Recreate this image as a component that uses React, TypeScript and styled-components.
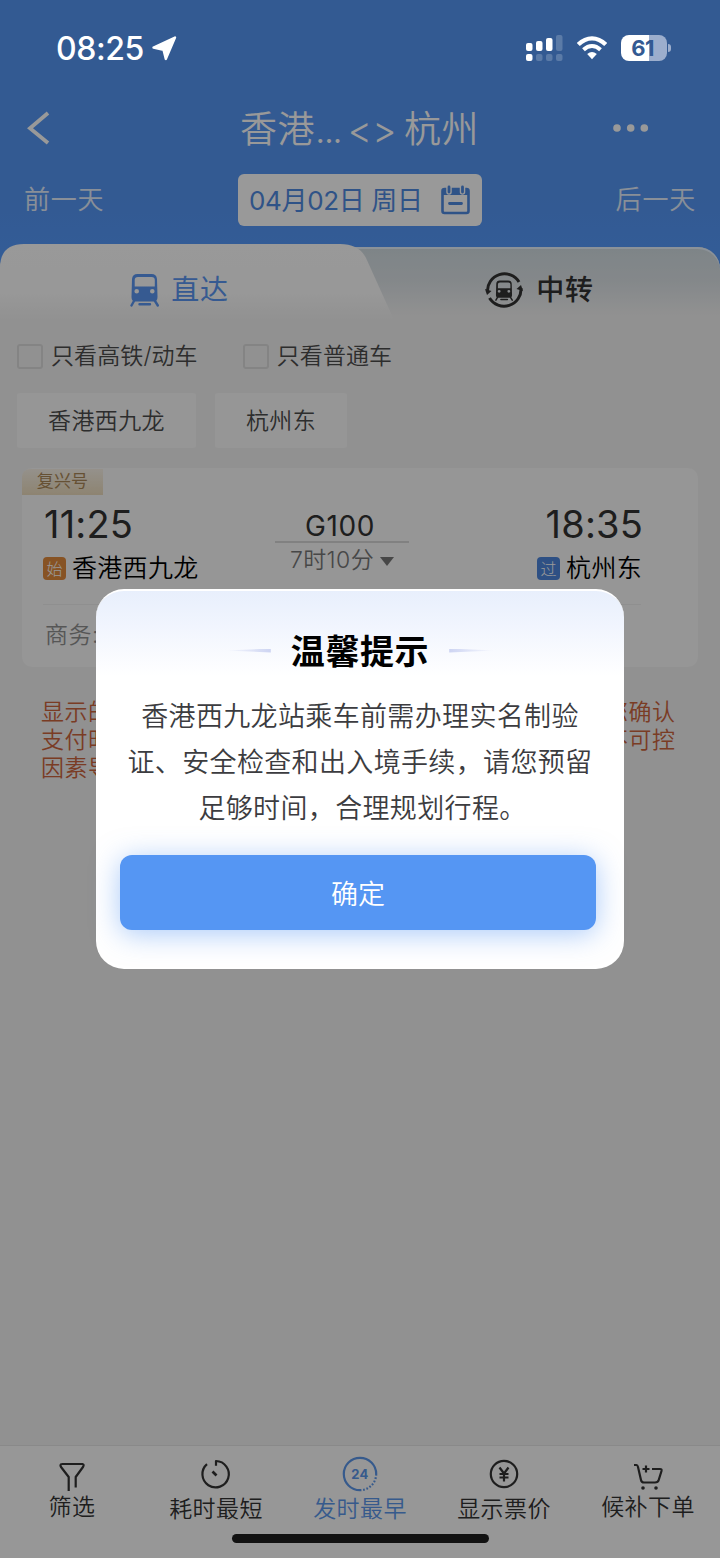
import React from "react";
import styled, { createGlobalStyle } from "styled-components";

const Global = createGlobalStyle`
  *, *::before, *::after { box-sizing: border-box; }
  body {
    margin: 0;
    font-family: Inter, "Noto Sans CJK SC", sans-serif;
    -webkit-font-smoothing: antialiased;
  }
  p, h1, h2 { margin: 0; font-weight: 400; }
  button { font: inherit; border: 0; padding: 0; background: none; color: inherit; }
  svg { display: block; flex: none; }
`;

const Page = styled.div`
  position: relative;
  width: 720px;
  height: 1558px;
  overflow: hidden;
  display: flex;
  flex-direction: column;
  background: #f2f2f2;
`;

/* status bar */
const StatusBar = styled.div`
  position: absolute;
  inset: 0 0 auto 0;
  z-index: 3;
  height: 96px;
  padding: 0 49px 0 56px;
  display: flex;
  align-items: center;
  color: #fff;
`;
const Clock = styled.span`
  font-size: 32px;
  font-weight: 500;
  letter-spacing: -0.4px;
  width: 96px;
  white-space: nowrap;
`;
const StatusIcons = styled.div`
  margin-left: auto;
  display: flex;
  align-items: center;
  gap: 14px;
`;
const Battery = styled.div`
  position: relative;
  width: 46px;
  height: 26px;
  margin-right: 4px;
  padding-right: 3px;
  border-radius: 8px;
  background: linear-gradient(90deg, #fff 61%, #9caecd 61%);
  color: #335a92;
  font-size: 22px;
  font-weight: 700;
  line-height: 26px;
  text-align: center;
  letter-spacing: -0.6px;
  &::after {
    content: "";
    position: absolute;
    right: -4px;
    top: 9px;
    width: 3px;
    height: 8px;
    border-radius: 0 3px 3px 0;
    background: #9caecd;
  }
`;

/* header */
const Header = styled.header`
  height: 272px;
  padding-top: 96px;
  background: linear-gradient(#5596f3 0, #5596f3 190px, #5599fb 250px);
  color: #fff;
`;
const TitleRow = styled.div`
  height: 62px;
  padding: 0 71px 0 26px;
  display: grid;
  grid-template-columns: 60px 1fr 40px;
  align-items: center;
`;
const Title = styled.h1`
  padding: 5px 0 0 24px;
  text-align: center;
  font-size: 37px;
  font-weight: 350;
  letter-spacing: 0.5px;
  word-spacing: -4px;
  line-height: 58px;
  white-space: nowrap;
`;
const Ellipsis = styled.span`
  letter-spacing: -1.9px;
`;
const DateRow = styled.div`
  margin-top: 16px;
  height: 52px;
  padding: 0 24px;
  display: grid;
  grid-template-columns: 1fr 244px 1fr;
  align-items: center;
`;
const DayLink = styled.span<{ $end?: boolean }>`
  padding-bottom: 6px;
  font-size: 26px;
  font-weight: 350;
  letter-spacing: 0.8px;
  opacity: 0.85;
  text-align: ${(p) => (p.$end ? "right" : "left")};
`;
const DateBox = styled.div`
  height: 52px;
  padding: 0 11px;
  display: flex;
  align-items: center;
  justify-content: space-between;
  border-radius: 6px;
  background: #fff;
  color: #4f8ae2;
  font-size: 26px;
  letter-spacing: -0.35px;
  white-space: nowrap;
`;
const DateText = styled.span`
  padding-bottom: 4px;
`;

/* tabs */
const Tabs = styled.nav`
  position: relative;
  height: 76px;
  margin-top: -28px;
  display: grid;
  grid-template-columns: 359px 1fr;
  &::before {
    content: "";
    position: absolute;
    inset: 3px 0 0 0;
    border-radius: 22px 22px 0 0;
    background: linear-gradient(#d2dde2, #dde3e7 35px, #f2f2f2 68px);
    box-shadow: inset 0 2px 0 #e8f3ff;
  }
`;
const Tab = styled.div<{ $active?: boolean }>`
  position: relative;
  display: flex;
  align-items: center;
  justify-content: center;
  gap: ${(p) => (p.$active ? "11px" : "13px")};
  height: 92px;
  line-height: 40px;
  font-size: 28px;
  letter-spacing: 0.8px;
  font-weight: ${(p) => (p.$active ? 400 : 500)};
  color: ${(p) => (p.$active ? "#5a96f2" : "#333")};
`;
const TabShape = styled.div`
  position: absolute;
  left: 0;
  top: 0;
  width: 394px;
  height: 76px;
  background: linear-gradient(#fff, #fdfdfd 50px, #f2f2f2 76px);
  clip-path: path("M0 76 V24 Q0 0 24 0 H340 Q359 0 366 14 L394 76 Z");
`;

/* filters */
const Checks = styled.div`
  height: 48px;
  margin-top: 12px;
  padding-left: 17px;
  display: flex;
  align-items: center;
  gap: 45px;
`;
const Check = styled.label`
  display: flex;
  align-items: center;
  gap: 8px;
  font-size: 23px;
  font-weight: 350;
  line-height: 32px;
  letter-spacing: 0.1px;
  color: #4c4c4c;
  &::before {
    content: "";
    width: 26px;
    height: 25px;
    border: 2px solid #dcdcdc;
    border-radius: 3px;
  }
`;
const Chips = styled.div`
  margin-top: 13px;
  padding-left: 17px;
  display: flex;
  gap: 19px;
`;
const Chip = styled.button<{ $w: number }>`
  width: ${(p) => p.$w}px;
  height: 55px;
  padding-bottom: 4px;
  border-radius: 3px;
  background: #fafafa;
  color: #4c4c4c;
  font-size: 23px;
  font-weight: 350;
  letter-spacing: 0.4px;
`;

/* train card */
const Card = styled.section`
  position: relative;
  margin: 20px 22px 0;
  height: 199px;
  border-radius: 10px;
  background: #fafafa;
`;
const Tag = styled.span`
  position: absolute;
  left: 0;
  top: 1px;
  width: 81px;
  height: 26px;
  text-align: center;
  font-size: 17px;
  line-height: 24px;
  letter-spacing: 0.2px;
  color: #ab8757;
  background: linear-gradient(#f8f2e8, #ecdcbd);
  border-radius: 8px 0 0 0;
`;
const Trip = styled.div`
  height: 137px;
  margin: 0 57px 0 21px;
  padding-top: 32px;
  display: grid;
  grid-template-columns: 1fr 134px 1fr;
  border-bottom: 1px solid #eeeeee;
`;
const Stop = styled.div<{ $end?: boolean }>`
  display: flex;
  flex-direction: column;
  align-items: ${(p) => (p.$end ? "flex-end" : "flex-start")};
`;
const Time = styled.span`
  height: 48px;
  padding-left: 1px;
  line-height: 48px;
  font-size: 38px;
  color: #333;
  letter-spacing: 0.2px;
  margin-right: -2px;
`;
const Station = styled.span`
  display: flex;
  align-items: center;
  gap: 6px;
  height: 40px;
  line-height: 36px;
  font-size: 25px;
  font-weight: 350;
  letter-spacing: 0.3px;
  color: #000;
  white-space: nowrap;
`;
const StationName = styled.span`
  margin-right: -1px;
`;
const Badge = styled.i<{ $c: string }>`
  width: 23px;
  height: 23px;
  border-radius: 4px;
  background: ${(p) => p.$c};
  color: #fff;
  font: 300 16px/22px "Noto Sans CJK SC", sans-serif;
  text-align: center;
  letter-spacing: 0;
`;
const Middle = styled.div`
  display: flex;
  flex-direction: column;
  align-items: center;
  padding-top: 9px;
`;
const TrainNo = styled.span`
  width: 134px;
  height: 34px;
  line-height: 34px;
  text-align: center;
  font-size: 28px;
  letter-spacing: 0.6px;
  color: #333;
  border-bottom: 2px solid #d8d8d8;
  padding-right: 4px;
`;
const Duration = styled.span`
  display: flex;
  align-items: center;
  gap: 6px;
  height: 35px;
  line-height: 32px;
  font-size: 23px;
  font-weight: 350;
  letter-spacing: 0.4px;
  color: #777;
  white-space: nowrap;
`;
const DurationText = styled.span`
  padding-bottom: 1px;
`;
const Seats = styled.p`
  padding: 13px 0 0 23px;
  font-size: 23px;
  font-weight: 350;
  letter-spacing: 0.5px;
  line-height: 34px;
  color: #8f8f8f;
`;
const Notice = styled.p`
  margin: 32px 0 0 41px;
  width: 650px;
  font-size: 23px;
  font-weight: 350;
  line-height: 27.8px;
  letter-spacing: 0.5px;
  color: #cc643d;
  white-space: pre;
`;

/* bottom bar */
const BottomBar = styled.footer`
  height: 113px;
  margin-top: auto;
  padding-top: 10px;
  display: grid;
  grid-template-columns: repeat(5, 144px);
  background: #fcfcfc;
  border-top: 1px solid #e4e4e4;
`;
const Action = styled.button<{ $active?: boolean; $raised?: boolean }>`
  display: flex;
  flex-direction: column;
  align-items: center;
  gap: ${(p) => (p.$raised ? 0 : 2)}px;
  height: 90px;
  font-size: 23px;
  line-height: 30px;
  letter-spacing: 0.4px;
  color: ${(p) => (p.$active ? "#5b96ea" : "#333")};
  font-weight: 350;
`;
const HomeIndicator = styled.div`
  position: absolute;
  left: 232px;
  bottom: 15px;
  z-index: 3;
  width: 257px;
  height: 9px;
  border-radius: 5px;
  background: #121212;
`;

/* dialog */
const Overlay = styled.div`
  position: absolute;
  inset: 0;
  z-index: 2;
  display: flex;
  align-items: center;
  justify-content: center;
  background: rgba(0, 0, 0, 0.4);
`;
const Dialog = styled.div`
  width: 528px;
  height: 380px;
  padding: 33px 24px 0;
  border-radius: 28px;
  border-top: 2px solid #fff;
  background: linear-gradient(#e8effc, #f1f5fe 35px, #fff 85px);
`;
const DialogTitle = styled.h2`
  display: flex;
  align-items: center;
  justify-content: center;
  gap: 20px;
  height: 50px;
  font-size: 34px;
  font-weight: 700;
  letter-spacing: 0.6px;
  color: #000;
  white-space: nowrap;
`;
const Dash = styled.i<{ $right?: boolean }>`
  width: 46px;
  height: 4px;
  margin-top: 3px;
  background: linear-gradient(${(p) => (p.$right ? 270 : 90)}deg, rgba(207, 212, 240, 0), #cdd4f2);
  clip-path: ${(p) => (p.$right ? "polygon(0 0, 0 100%, 100% 50%)" : "polygon(100% 0, 100% 100%, 0 50%)")};
`;
const Message = styled.p`
  margin-top: 20px;
  text-align: center;
  font-size: 27px;
  font-weight: 350;
  line-height: 46px;
  letter-spacing: 0.35px;
  color: #3c3c40;
  white-space: pre;
`;
const LastLine = styled.span`
  padding-left: 5px;
`;
const Confirm = styled.button`
  display: block;
  width: 476px;
  height: 75px;
  margin-top: 23px;
  border-radius: 12px;
  background: #5596f3;
  box-shadow: 0 4px 28px rgba(85, 150, 243, 0.5);
  color: #fff;
  font-size: 27px;
  font-weight: 350;
`;

const TrainFront = ({ x = 0, y = 0, s = 1 }: { x?: number; y?: number; s?: number }) => (
  <g transform={`translate(${x} ${y}) scale(${s})`}>
    <path
      fillRule="evenodd"
      fill="currentColor"
      d="M7.500 1H21.500Q26.500 1 27 6L27.500 24Q27.500 28.500 23.500 28.500H5.500Q1.500 28.500 1.500 24L2 6Q2.500 1 7.500 1ZM8 4Q4.700 4 4.700 7V13.500H24.800V7Q24.800 4 21.500 4ZM4.400 18.300A2.300 2.300 0 0 0 9 18.300A2.300 2.300 0 0 0 4.400 18.300ZM20 18.300A2.300 2.300 0 0 0 24.600 18.300A2.300 2.300 0 0 0 20 18.300Z"
    />
    <path stroke="currentColor" strokeWidth="2.400" strokeLinecap="round" d="M4 28L1.500 32.500M25 28L27.800 32.500M9.500 31.300H20" />
  </g>
);

const actions = [
  {
    label: "筛选",
    raised: true,
    icon: <path d="M8 8H28.500Q30.500 8.500 29 11L21.700 21V31.500M14.700 35V21L7 11Q5.500 8.500 8 8" />,
  },
  {
    label: "耗时最短",
    icon: (
      <>
        <path d="M9 8.200A13.200 13.200 0 1 0 18 5V9.800" />
        <path d="M14.500 15.500L18.500 19.500" strokeWidth="2.600" />
      </>
    ),
  },
  {
    label: "发时最早",
    active: true,
    icon: (
      <>
        <path d="M18 34.200A16.200 16.200 0 1 1 34.200 18" />
        <path d="M34.200 18A16.200 16.200 0 0 1 18 34.200" strokeDasharray="1.700 1.700" />
        <text x="18" y="23" textAnchor="middle" fontSize="13" fontWeight="700" fill="currentColor" stroke="none">24</text>
      </>
    ),
  },
  {
    label: "显示票价",
    icon: (
      <>
        <circle cx="18" cy="18" r="13.200" />
        <path d="M13.500 11.500L18 17.500L22.500 11.500M18 17.500V25.500M13.500 18H22.500M13.500 21.500H22.500" />
      </>
    ),
  },
  {
    label: "候补下单",
    raised: true,
    icon: (
      <>
        <path d="M4 9H6.500Q7.500 9 8 11L11 24Q11.500 26.500 14 26.500H25Q28 26.500 28.700 24L31.500 15Q32 13 30 13H22M16 9.500V16.500M12.500 13H19.500" />
        <circle cx="13" cy="32" r="1.800" fill="currentColor" stroke="none" />
        <circle cx="26" cy="32" r="1.800" fill="currentColor" stroke="none" />
      </>
    ),
  },
];

export default function App() {
  return (
    <Page>
      <Global />
      <StatusBar>
        <Clock>08:25</Clock>
        <svg width="26" height="26" viewBox="0 0 26 26">
          <path
            fill="#fff"
            stroke="#fff"
            strokeWidth="2.400"
            strokeLinejoin="round"
            d="M1.500 12.500L23 2.500L13.800 24L11.500 14.800Z"
          />
        </svg>
        <StatusIcons>
          <svg width="37" height="26" viewBox="0 0 37 26" fill="#fff">
            <rect x="0" y="8" width="6.500" height="8" rx="2" />
            <rect x="10" y="6" width="6.500" height="10" rx="2" />
            <rect x="20" y="3" width="6.500" height="13" rx="2" />
            <rect x="30" y="0" width="6.500" height="16" rx="2" opacity=".2" />
            <rect x="0" y="19" width="6.500" height="7" rx="2" />
            <rect x="10" y="19" width="6.500" height="7" rx="2" opacity=".2" />
            <rect x="20" y="19" width="6.500" height="7" rx="2" opacity=".2" />
            <rect x="30" y="19" width="6.500" height="7" rx="2" opacity=".2" />
          </svg>
          <svg width="30" height="24" viewBox="0 0 30 24" fill="none" stroke="#fff" strokeWidth="4.200">
            <path d="M1.300 8.500Q7.500 2.300 15 2.300T28.700 8.500" />
            <path d="M6.500 13.700Q10.500 10 15 10T23.500 13.700" strokeWidth="4" />
            <path d="M10.200 18Q15 13.800 19.800 18L15 23.200Z" fill="#fff" stroke="none" />
          </svg>
          <Battery>61</Battery>
        </StatusIcons>
      </StatusBar>

      <Header>
        <TitleRow>
          <svg width="26" height="34" viewBox="0 0 26 34" fill="none" stroke="#fff" strokeWidth="3.800">
            <path d="M22 2L4 17.300L22 32" />
          </svg>
          <Title>香港<Ellipsis>...</Ellipsis> &lt;&gt; 杭州</Title>
          <svg width="40" height="10" viewBox="0 0 40 10" fill="#fff">
            <circle cx="8" cy="5" r="3.800" />
            <circle cx="21.700" cy="5" r="3.800" />
            <circle cx="35.300" cy="5" r="3.800" />
          </svg>
        </TitleRow>
        <DateRow>
          <DayLink>前一天</DayLink>
          <DateBox>
            <DateText>04月02日 周日</DateText>
            <svg width="30" height="30" viewBox="0 0 30 30" fill="none">
              <rect x="1.500" y="4" width="26" height="24" rx="2" stroke="#4f8ae2" strokeWidth="2.600" />
              <path d="M1 4H28V10H1Z" fill="#4f8ae2" />
              <path d="M8 1V7M21.500 1V7" stroke="#fff" strokeWidth="5.500" strokeLinecap="round" />
              <path d="M8 2V7M21.500 2V7M8.500 18.500H20.500" stroke="#4f8ae2" strokeWidth="2.800" strokeLinecap="round" />
            </svg>
          </DateBox>
          <DayLink $end>后一天</DayLink>
        </DateRow>
      </Header>

      <Tabs>
        <TabShape />
        <Tab $active>
          <svg width="30" height="34" viewBox="0 0 30 34" fill="none">
            <TrainFront />
          </svg>
          直达
        </Tab>
        <Tab>
          <svg width="38" height="38" viewBox="0 0 38 38" fill="none">
            <path stroke="currentColor" strokeWidth="3" d="M2.500 21A17 17 0 0 1 34 11M36 17A17 17 0 0 1 4.500 27" />
            <path fill="currentColor" d="M0 18L6.500 20L2 24ZM38 20L31.500 18L36 14Z" />
            <TrainFront x={10} y={9} s={0.62} />
          </svg>
          中转
        </Tab>
      </Tabs>

      <Checks>
        <Check>只看高铁/动车</Check>
        <Check>只看普通车</Check>
      </Checks>
      <Chips>
        <Chip $w={179}>香港西九龙</Chip>
        <Chip $w={132}>杭州东</Chip>
      </Chips>

      <Card>
        <Tag>复兴号</Tag>
        <Trip>
          <Stop>
            <Time>11:25</Time>
            <Station><Badge $c="#e28a3c">始</Badge><StationName>香港西九龙</StationName></Station>
          </Stop>
          <Middle>
            <TrainNo>G100</TrainNo>
            <Duration>
              <DurationText>7时10分</DurationText>
              <svg width="14" height="10" viewBox="0 0 14 10" fill="#777"><path d="M0 1H14L7 10Z" /></svg>
            </Duration>
          </Middle>
          <Stop $end>
            <Time>18:35</Time>
            <Station><Badge $c="#4d86dc">过</Badge><StationName>杭州东</StationName></Station>
          </Stop>
        </Trip>
        <Seats>商务:</Seats>
      </Card>

      <Notice>{`显示的卧铺票价均为上铺票价，供您参考。具体票价以您确认
支付时实际购买的铺别票价为准。如因运力原因或其他不可控
因素导致列车调度调整时，当前车型可能会发生变动。`}</Notice>

      <BottomBar>
        {actions.map((a) => (
          <Action key={a.label} $active={a.active} $raised={a.raised}>
            <svg width="36" height="36" viewBox="0 0 36 36" fill="none" stroke="currentColor" strokeWidth="2.200" strokeLinejoin="round">
              {a.icon}
            </svg>
            {a.label}
          </Action>
        ))}
      </BottomBar>

      <Overlay>
        <Dialog>
          <DialogTitle><Dash />温馨提示<Dash $right /></DialogTitle>
          <Message>
            {"香港西九龙站乘车前需办理实名制验\n证、安全检查和出入境手续，请您预留\n"}
            <LastLine>足够时间，合理规划行程。</LastLine>
          </Message>
          <Confirm>确定</Confirm>
        </Dialog>
      </Overlay>
      <HomeIndicator />
    </Page>
  );
}
